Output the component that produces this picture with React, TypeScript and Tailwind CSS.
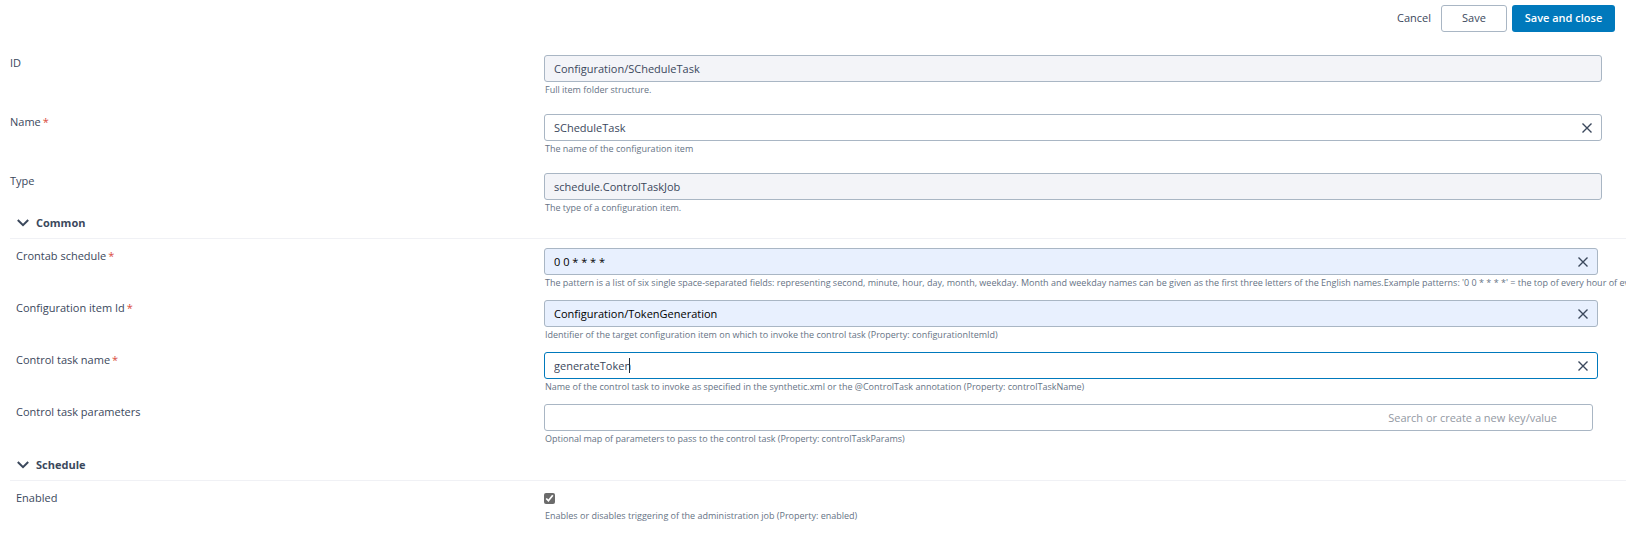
import { useState } from "react";
import type { ReactNode } from "react";
import clsx from "clsx";

type FieldRowProps = {
  id: string;
  label: string;
  help: string;
  required?: boolean;
  children: ReactNode;
};

function FieldRow({ id, label, help, required, children }: FieldRowProps) {
  return (
    <div className="flex items-start">
      <label htmlFor={id} className="w-1/3 shrink-0 text-[11px] leading-4 text-[#3b485c]">
        {label}
        {required && <span className="ml-0.5 text-[#d94c3d]">*</span>}
      </label>
      <div className="w-2/3">
        {children}
        <p id={`${id}-help`} className="pt-0.5 pl-px text-[9px] leading-3 whitespace-nowrap text-[#667385]">
          {help}
        </p>
      </div>
    </div>
  );
}

type TextFieldProps = {
  id: string;
  initial: string;
  readOnly?: boolean;
  tone?: "plain" | "muted" | "autofill" | "focused";
};

const TONES = {
  plain: "border-[#a9b6c4] bg-white text-[#3b485c]",
  muted: "border-[#a9b6c4] bg-[#f3f4f8] text-[#3b485c]",
  autofill: "border-[#a9b6c4] bg-[#e8f0fe] text-black",
  focused: "border-[#0079bc] bg-white text-[#3b485c]",
};

function TextField({ id, initial, readOnly = false, tone = "plain" }: TextFieldProps) {
  const [value, setValue] = useState(initial);

  return (
    <div className="relative">
      <input
        id={id}
        type="text"
        value={value}
        readOnly={readOnly}
        aria-describedby={`${id}-help`}
        onChange={(e) => setValue(e.target.value)}
        className={clsx("block h-[27px] w-full rounded-[3px] border px-[9px] text-[11px] outline-none", TONES[tone])}
      />
      {tone === "focused" && <span className="absolute top-1.5 left-[85px] h-[15px] w-px bg-[#1f2937]" />}
      {!readOnly && (
        <button
          type="button"
          aria-label="Clear"
          onClick={() => setValue("")}
          className="absolute inset-y-0 right-[9px] flex w-3 items-center justify-center text-[#3b485c]"
        >
          <svg viewBox="0 0 12 12" className="size-3" fill="none" stroke="currentColor" strokeWidth="1.4">
            <path d="M1.5 1.5l9 9M10.5 1.5l-9 9" />
          </svg>
        </button>
      )}
    </div>
  );
}

function Section({ title, children }: { title: string; children: ReactNode }) {
  const [open, setOpen] = useState(true);

  return (
    <section className="mb-[11px]">
      <h2 className="ml-[10px] border-b border-[#f0f1f5] pb-[6px]">
        <button
          type="button"
          aria-expanded={open}
          onClick={() => setOpen(!open)}
          className="flex h-[18px] w-full items-center gap-[7px] pl-[7px] text-[11px] font-bold text-[#3b485c]"
        >
          <svg viewBox="0 0 12 8" className="h-2 w-3" fill="none" stroke="currentColor" strokeWidth="2">
            <path d="M0.8 1l5.2 5.2L11.2 1" />
          </svg>
          {title}
        </button>
      </h2>
      {open && <div className="flex flex-col gap-[11px] pt-[9px] pr-[26px] pl-4">{children}</div>}
    </section>
  );
}

export default function App() {
  const [enabled, setEnabled] = useState(true);

  return (
    <main className="overflow-x-hidden bg-white font-['Open_Sans',sans-serif] text-[11px] text-[#3b485c]">
      <form onSubmit={(e) => e.preventDefault()}>
        <div className="flex justify-end gap-[5px] pt-[5px] pr-[11px]">
          <button type="button" className="h-[27px] px-[5px]">
            Cancel
          </button>
          <button type="button" className="h-[27px] w-[66px] rounded-[3px] border border-[#a9b6c4] bg-white">
            Save
          </button>
          <button type="submit" className="h-[27px] w-[103px] rounded-[3px] bg-[#0079bc] font-semibold text-white">
            Save and close
          </button>
        </div>

        <div className="flex flex-col gap-[18px] pt-[23px] pr-[14px] pl-[10px]">
          <FieldRow id="item-id" label="ID" help="Full item folder structure.">
            <div className="pr-[10px]">
              <TextField id="item-id" initial="Configuration/SCheduleTask" readOnly tone="muted" />
            </div>
          </FieldRow>
          <FieldRow id="item-name" label="Name" help="The name of the configuration item" required>
            <div className="pr-[10px]">
              <TextField id="item-name" initial="SCheduleTask" />
            </div>
          </FieldRow>
          <FieldRow id="item-type" label="Type" help="The type of a configuration item.">
            <div className="pr-[10px]">
              <TextField id="item-type" initial="schedule.ControlTaskJob" readOnly tone="muted" />
            </div>
          </FieldRow>
        </div>

        <Section title="Common">
          <FieldRow
            id="crontab"
            label="Crontab schedule"
            help="The pattern is a list of six single space-separated fields: representing second, minute, hour, day, month, weekday. Month and weekday names can be given as the first three letters of the English names.Example patterns: '0 0 * * * *' = the top of every hour of every day."
            required
          >
            <div className="pr-0.5">
              <TextField id="crontab" initial="0 0 * * * *" tone="autofill" />
            </div>
          </FieldRow>
          <FieldRow
            id="config-item"
            label="Configuration item Id"
            help="Identifier of the target configuration item on which to invoke the control task (Property: configurationItemId)"
            required
          >
            <div className="pr-0.5">
              <TextField id="config-item" initial="Configuration/TokenGeneration" tone="autofill" />
            </div>
          </FieldRow>
          <FieldRow
            id="task-name"
            label="Control task name"
            help="Name of the control task to invoke as specified in the synthetic.xml or the @ControlTask annotation (Property: controlTaskName)"
            required
          >
            <div className="pr-0.5">
              <TextField id="task-name" initial="generateToken" tone="focused" />
            </div>
          </FieldRow>
          <FieldRow
            id="task-params"
            label="Control task parameters"
            help="Optional map of parameters to pass to the control task (Property: controlTaskParams)"
          >
            <div className="pr-[7px]">
              <input
                id="task-params"
                type="text"
                placeholder="Search or create a new key/value"
                aria-describedby="task-params-help"
                className="block h-[27px] w-full rounded-[3px] border border-[#a9b6c4] bg-white pr-[35px] text-right text-[11px] outline-none placeholder:text-[#9399a3]"
              />
            </div>
          </FieldRow>
        </Section>

        <Section title="Schedule">
          <FieldRow
            id="enabled"
            label="Enabled"
            help="Enables or disables triggering of the administration job (Property: enabled)"
          >
            <div className="pt-[3px] pb-1">
              <input
                id="enabled"
                type="checkbox"
                checked={enabled}
                aria-describedby="enabled-help"
                onChange={(e) => setEnabled(e.target.checked)}
                className="block size-[11px] accent-[#6b6b6b]"
              />
            </div>
          </FieldRow>
        </Section>
      </form>
    </main>
  );
}
